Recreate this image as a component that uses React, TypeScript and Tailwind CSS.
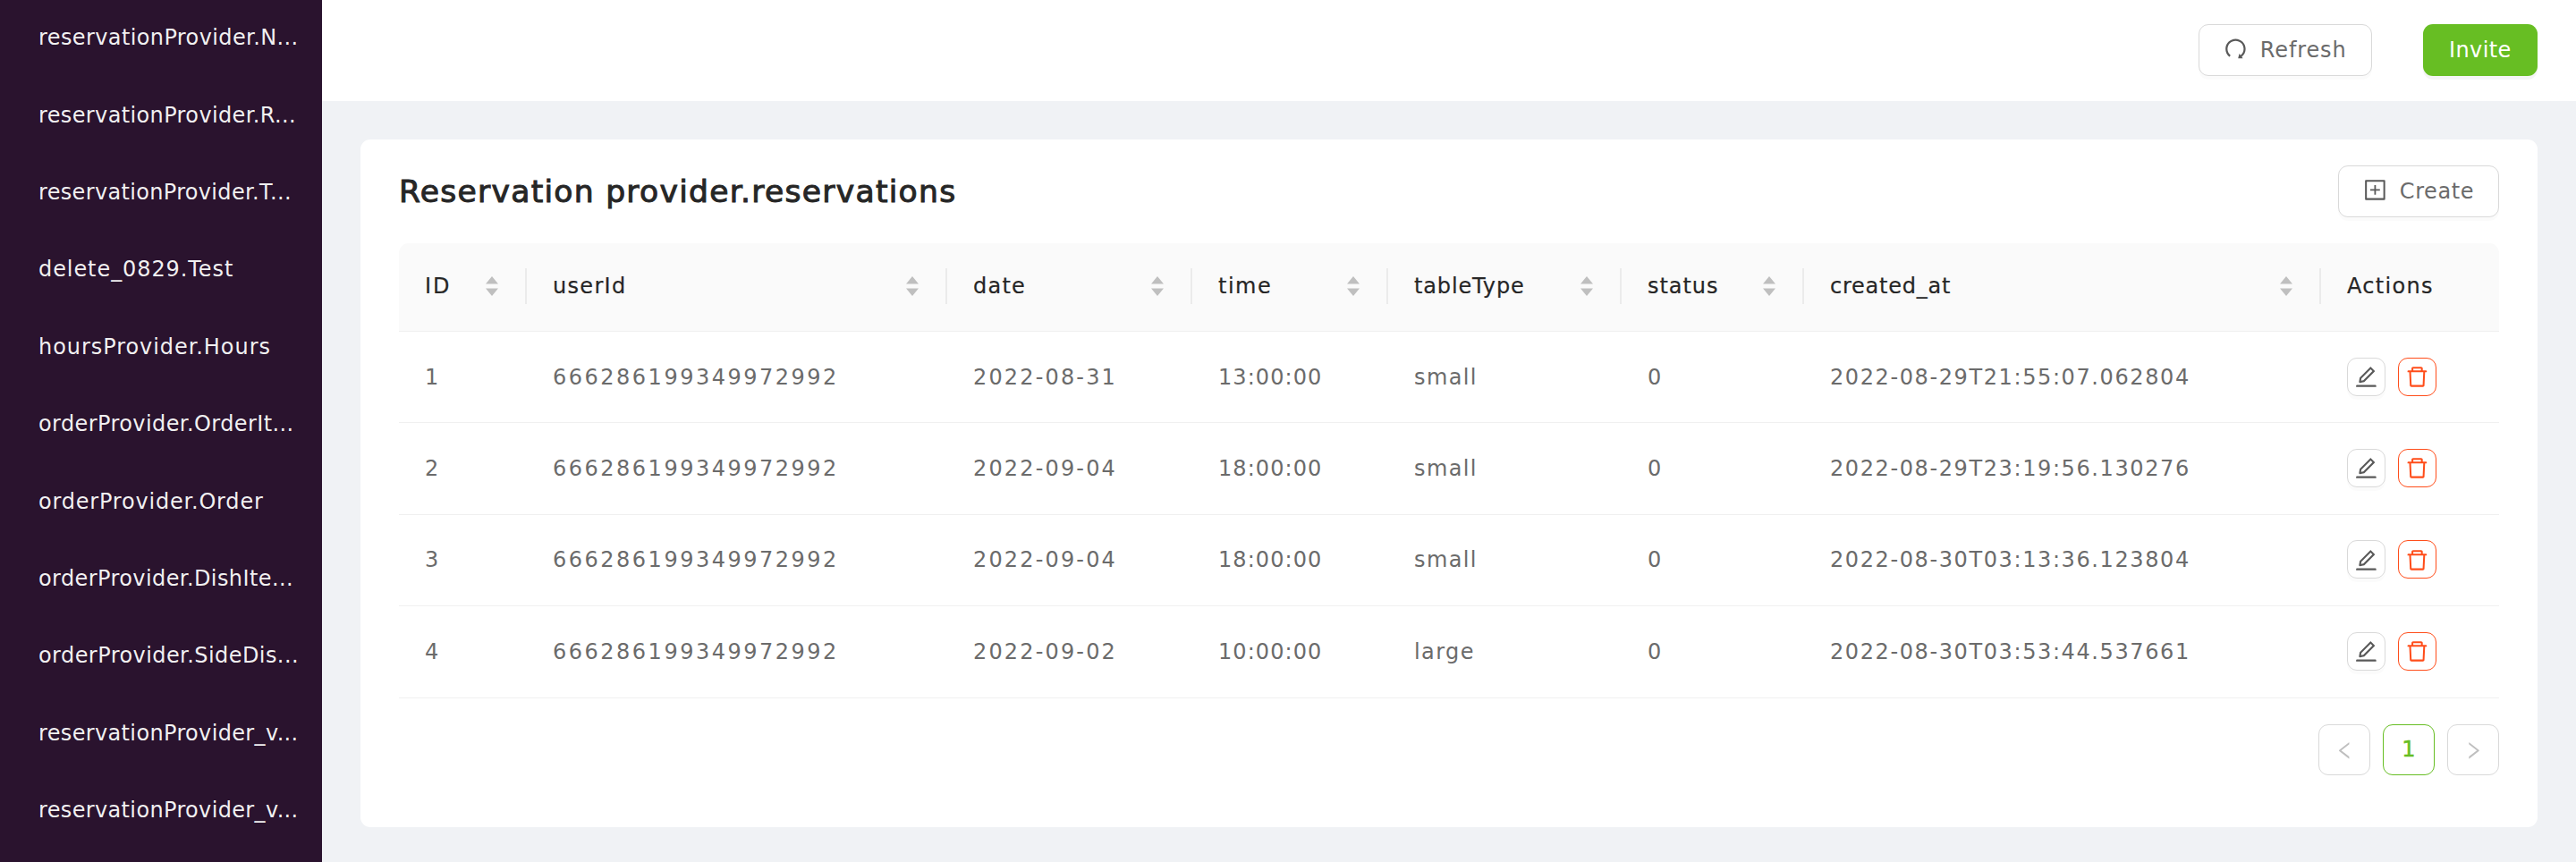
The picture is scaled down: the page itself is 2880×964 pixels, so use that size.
import React from 'react';
import {
  AiOutlineRedo,
  AiOutlinePlusSquare,
  AiOutlineEdit,
  AiOutlineDelete,
  AiOutlineLeft,
  AiOutlineRight,
} from 'react-icons/ai';

const menu = [
  { label: 'reservationProvider.N...', track: 'tracking-[0.39px]' },
  { label: 'reservationProvider.R...', track: 'tracking-[0.37px]' },
  { label: 'reservationProvider.T...', track: 'tracking-[0.33px]' },
  { label: 'delete_0829.Test', track: 'tracking-[0.92px]' },
  { label: 'hoursProvider.Hours', track: 'tracking-[0.94px]' },
  { label: 'orderProvider.OrderIt...', track: 'tracking-[0.41px]' },
  { label: 'orderProvider.Order', track: 'tracking-[0.8px]' },
  { label: 'orderProvider.DishIte...', track: 'tracking-[0.41px]' },
  { label: 'orderProvider.SideDis...', track: 'tracking-[0.43px]' },
  { label: 'reservationProvider_v...', track: 'tracking-[0.35px]' },
  { label: 'reservationProvider_v...', track: 'tracking-[0.35px]' },
];

const columns = [
  { label: 'ID', track: 'tracking-[2px]' },
  { label: 'userId', track: 'tracking-[1.31px]' },
  { label: 'date', track: 'tracking-[1.22px]' },
  { label: 'time', track: 'tracking-[1.51px]' },
  { label: 'tableType', track: 'tracking-[0.86px]' },
  { label: 'status', track: 'tracking-[0.95px]' },
  { label: 'created_at', track: 'tracking-[0.76px]' },
];

const rows = [
  ['1', '666286199349972992', '2022-08-31', '13:00:00', 'small', '0', '2022-08-29T21:55:07.062804'],
  ['2', '666286199349972992', '2022-09-04', '18:00:00', 'small', '0', '2022-08-29T23:19:56.130276'],
  ['3', '666286199349972992', '2022-09-04', '18:00:00', 'small', '0', '2022-08-30T03:13:36.123804'],
  ['4', '666286199349972992', '2022-09-02', '10:00:00', 'large', '0', '2022-08-30T03:53:44.537661'],
];

const cellStyle = [
  '',
  'tracking-[2.5px]',
  'tracking-[2.15px]',
  'tracking-[1.07px]',
  'tracking-[1.4px]',
  '',
  'tracking-[1.6px]',
];

const grid = 'grid grid-cols-[143px_470px_274px_219px_261px_204px_578px_199px]';
const button =
  'flex items-center h-[58px] rounded-[11px] border border-[#d9d9d9] bg-white pl-[26px] shadow-[0_4px_0_rgba(0,0,0,0.015)]';

function Sorter() {
  return (
    <svg width="14" height="22" viewBox="0 0 14 22" fill="#bfbfbf">
      <path d="M7 0 14 8.4H0zM7 22 0 13.6h14z" />
    </svg>
  );
}

export default function App() {
  return (
    <div className="flex h-[964px] w-[2880px] overflow-hidden bg-[#f0f2f5] font-['DejaVu_Sans',sans-serif] text-[24px] leading-none text-[#6b6b6b]">
      <aside className="w-[360px] shrink-0 bg-[#2a132e] text-white/95">
        <nav className="-mt-[1px]">
          {menu.map((m, i) => (
            <div key={i} className={`flex h-[86.4px] items-center pl-[43px] whitespace-nowrap ${m.track}`}>
              {m.label}
            </div>
          ))}
        </nav>
      </aside>

      <div className="flex flex-1 flex-col">
        <header className="flex h-[113px] items-center justify-end gap-[57px] bg-white pr-[43px]">
          <button className={`${button} mb-[1px] w-[194px]`}>
            <AiOutlineRedo className="mb-[3px] size-[28.8px] text-[#595959]" />
            <span className="mb-[1px] ml-[13px] tracking-[0.86px]">Refresh</span>
          </button>
          <button className="mb-[1px] flex h-[58px] w-[128px] items-center rounded-[11px] bg-[#67be23] pl-[29px] text-white shadow-[0_4px_0_rgba(0,0,0,0.04)]">
            <span className="mb-[1px] tracking-[0.39px]">Invite</span>
          </button>
        </header>

        <main className="mt-[43px] mr-[43px] ml-[43px] h-[769px] rounded-[11px] bg-white px-[43px] pt-[29px]">
          <div className="flex h-[58px] items-center justify-between">
            <h1 className="text-[34.6px] tracking-[1.25px] text-[#262626] [-webkit-text-stroke:1px_#262626]">
              Reservation provider.reservations
            </h1>
            <button className={`${button} w-[180px]`}>
              <AiOutlinePlusSquare className="mb-[3px] size-[28.8px] text-[#595959]" />
              <span className="ml-[13px] tracking-[0.6px]">Create</span>
            </button>
          </div>

          <section className="mt-[29px]">
            <div className={`${grid} h-[99px] items-center rounded-t-[11px] border-b border-[#f0f0f0] bg-[#fafafa] text-[#262626] [-webkit-text-stroke:0.2px_#262626]`}>
              {columns.map((c) => (
                <div
                  key={c.label}
                  className="mb-[3px] flex h-[40px] items-center justify-between border-r-2 border-[#ebebeb] pr-[30px] pl-[29px]"
                >
                  <span className={c.track}>{c.label}</span>
                  <Sorter />
                </div>
              ))}
              <div className="mb-[3px] pl-[29px] tracking-[1.31px]">Actions</div>
            </div>

            {rows.map((r) => (
              <div key={r[0]} className={`${grid} h-[102.4px] items-center border-b border-[#f0f0f0]`}>
                {r.map((v, i) => (
                  <div key={i} className={`pl-[29px] ${cellStyle[i]}`}>
                    {v}
                  </div>
                ))}
                <div className="mb-[1px] flex gap-[14px] pl-[29px]">
                  <button className="flex size-[43px] items-center justify-center rounded-[11px] border border-[#d9d9d9] text-[#595959] shadow-[0_4px_0_rgba(0,0,0,0.015)]">
                    <AiOutlineEdit className="size-[28.8px]" />
                  </button>
                  <button className="flex size-[43px] items-center justify-center rounded-[11px] border border-[#ff4d1a] text-[#ff4d1a]">
                    <AiOutlineDelete className="size-[28.8px]" />
                  </button>
                </div>
              </div>
            ))}
          </section>

          <div className="mt-[29px] flex justify-end gap-[14px]">
            <button className="flex h-[57px] w-[58px] items-center justify-center rounded-[11px] border border-[#d9d9d9] text-[#bfbfbf]">
              <AiOutlineLeft className="mt-[2px] size-[24.7px]" />
            </button>
            <button className="flex h-[57px] w-[58px] items-center justify-center rounded-[11px] border border-[#67be23] text-[#67be23] [-webkit-text-stroke:0.5px_#67be23]">
              1
            </button>
            <button className="flex h-[57px] w-[58px] items-center justify-center rounded-[11px] border border-[#d9d9d9] text-[#bfbfbf]">
              <AiOutlineRight className="mt-[2px] size-[24.7px]" />
            </button>
          </div>
        </main>
      </div>
    </div>
  );
}
